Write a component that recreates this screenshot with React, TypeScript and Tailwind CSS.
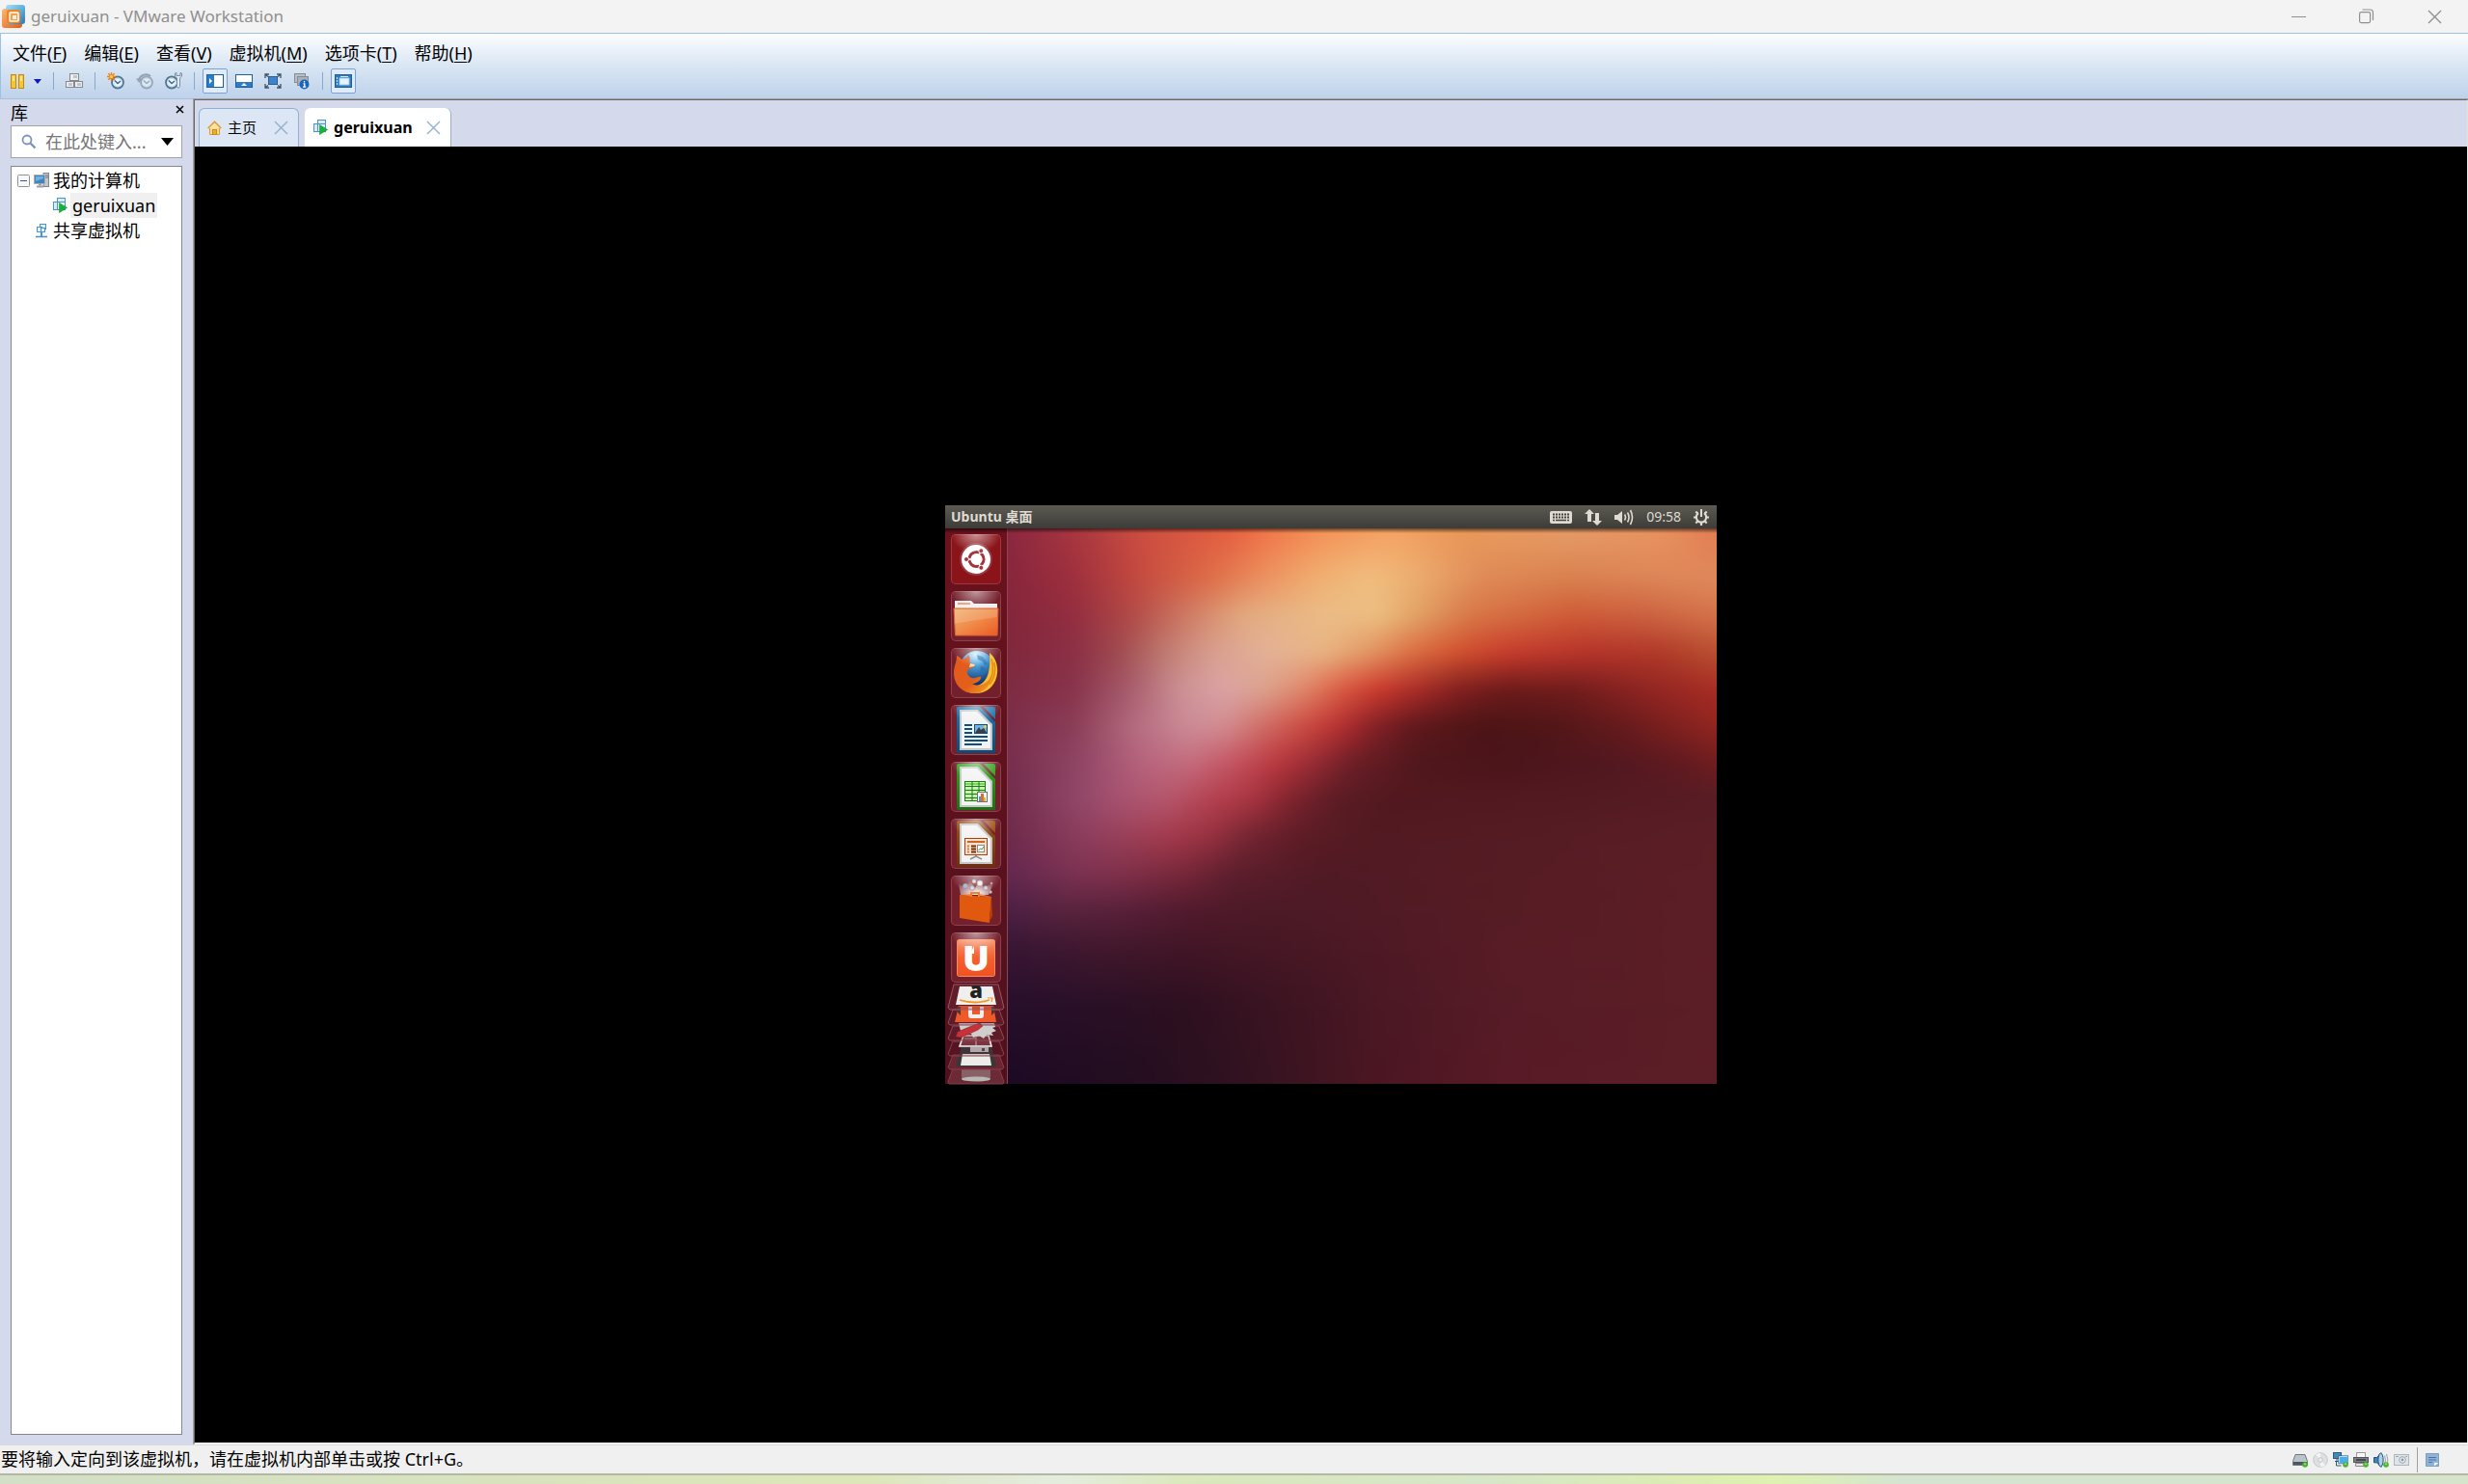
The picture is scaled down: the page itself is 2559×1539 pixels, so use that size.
import * as React from 'react';
import { clsx } from 'clsx';

type IconProps = { className?: string };

const UI_FONT = "font-['Noto_Sans','Noto_Sans_CJK_SC',sans-serif]";

/* ---------- Window chrome icons ---------- */

function AppLogo() {
  return (
    <svg width="24" height="24" viewBox="0 0 24 24">
      <defs>
        <linearGradient id="logoBlue" x1="0" y1="0" x2="1" y2="1">
          <stop offset="0" stopColor="#a9def5" />
          <stop offset=".5" stopColor="#5fb4e0" />
          <stop offset="1" stopColor="#2c78ae" />
        </linearGradient>
        <linearGradient id="logoOrange" x1="0" y1="0" x2="1" y2="1">
          <stop offset="0" stopColor="#fbb972" />
          <stop offset="1" stopColor="#ea5a0c" />
        </linearGradient>
      </defs>
      <rect x="4" y="0" width="20" height="20" rx="3" fill="url(#logoBlue)" />
      <path
        d="M3 4h2v14a2 2 0 0 0 2 2h14v1a3 3 0 0 1-3 3H3a3 3 0 0 1-3-3V7a3 3 0 0 1 3-3z"
        fill="url(#logoOrange)"
      />
      <rect x="5" y="5" width="14" height="14" rx="2" fill="#f08326" />
      <rect x="8" y="8" width="9" height="9" rx="1" fill="#f7a04a" stroke="#fff" strokeWidth="1.500" />
      <rect x="11" y="11" width="4" height="4" fill="#fdeedd" />
    </svg>
  );
}

function MinimizeIcon() {
  return (
    <svg width="16" height="16" viewBox="0 0 16 16" stroke="#8f8f8f">
      <path d="M0 8.500h15" />
    </svg>
  );
}

function RestoreIcon() {
  return (
    <svg width="16" height="16" viewBox="0 0 16 16" fill="none" stroke="#8f8f8f" strokeWidth="1.200">
      <rect x="0.600" y="3.600" width="11" height="11" rx="1.500" />
      <path d="M3.500 1h8a3 3 0 0 1 3 3v8" />
    </svg>
  );
}

function CloseIcon({ className }: IconProps) {
  return (
    <svg width="15" height="15" viewBox="0 0 15 15" fill="none" strokeWidth="1.400" className={className}>
      <path d="M1 1l13 13M14 1L1 14" stroke="currentColor" />
    </svg>
  );
}

/* ---------- Toolbar icons ---------- */

function PauseIcon() {
  return (
    <svg width="14" height="15" viewBox="0 0 14 15">
      <g fill="#f7c531" stroke="#c78a06">
        <rect x="0.500" y="0.500" width="5" height="14" />
        <rect x="8.500" y="0.500" width="5" height="14" />
      </g>
      <path d="M2 2h2v5H2zM10 2h2v5h-2z" fill="#fde389" />
    </svg>
  );
}

function BlocksIcon() {
  return (
    <svg width="18" height="16" viewBox="0 0 18 16">
      <g fill="#eceeef" stroke="#85898f">
        <rect x="4.500" y="0.500" width="9" height="7" />
        <rect x="0.500" y="8.500" width="8" height="6" />
        <rect x="9.500" y="8.500" width="8" height="6" />
      </g>
      <path d="M8 2h4v3H8zM3 10h4v3H3zM12 10h4v3h-4z" fill="#c2c6cb" />
    </svg>
  );
}

function ClockFace({ muted }: { muted?: boolean }) {
  return (
    <g opacity={muted ? 0.65 : 1}>
      <circle cx="11" cy="10.500" r="6" fill="#eaf4fb" stroke={muted ? '#7e8b9c' : '#4f7896'} strokeWidth="1.800" />
      <circle cx="11" cy="10.500" r="4.300" fill="none" stroke="#b8d2e2" strokeWidth=".8" />
      <path d="M8 8.500l3 3 3-2.500" fill="none" stroke={muted ? '#7e8b9c' : '#3c6788'} strokeWidth="1.400" />
    </g>
  );
}

function TakeSnapshotIcon() {
  return (
    <svg width="18" height="18" viewBox="0 0 18 18">
      <ClockFace />
      <path d="M4.500 0v9M0 4.500h9M1.300 1.300l6.400 6.400M7.700 1.300L1.300 7.700" stroke="#f07d12" strokeWidth="1.400" />
      <circle cx="4.500" cy="4.500" r="1.600" fill="#ffd35a" />
    </svg>
  );
}

function RevertSnapshotIcon() {
  return (
    <svg width="18" height="18" viewBox="0 0 18 18">
      <ClockFace muted />
      <path d="M3 8a7.500 7.500 0 0 1 12-4" fill="none" stroke="#93a2b4" strokeWidth="2.200" />
      <path d="M0 6.500h6.500L3.200 11z" fill="#93a2b4" />
    </svg>
  );
}

function ManageSnapshotIcon() {
  return (
    <svg width="18" height="18" viewBox="0 0 18 18">
      <g transform="translate(-4 0)">
        <ClockFace />
      </g>
      <path
        d="M10.500 1v3l2 2v8.500a1.500 1.500 0 0 0 3 0V6l2-2V1l-1.500-.5v3h-4V.5z"
        fill="#e4eaf0"
        stroke="#6c87a0"
        strokeWidth=".9"
      />
    </svg>
  );
}

function SidebarIcon() {
  return (
    <svg width="18" height="14" viewBox="0 0 18 14">
      <rect x="0.500" y="0.500" width="17" height="13" fill="#fff" stroke="#1d5f9f" />
      <rect x="1" y="1" width="7" height="12" fill="#2b7cc4" />
      <path d="M3 4v6l3-3z" fill="#fff" />
    </svg>
  );
}

function ThumbnailBarIcon() {
  return (
    <svg width="18" height="14" viewBox="0 0 18 14">
      <rect x="0.500" y="0.500" width="17" height="13" fill="#fff" stroke="#1d5f9f" />
      <rect x="1" y="8" width="16" height="5" fill="#2b7cc4" />
      <path d="M6 12h6l-3-3z" fill="#fff" />
    </svg>
  );
}

function FullscreenIcon() {
  return (
    <svg width="18" height="16" viewBox="0 0 18 16">
      <rect x="4.500" y="3.500" width="9" height="8" fill="#3c83c8" stroke="#2a5e94" />
      <path
        d="M1 5V1h4M13 1h4v4M17 11v4h-4M5 15H1v-4M1.500 1.500l2.500 2M16.500 1.500l-2.500 2M1.500 14.500l2.500-2M16.500 14.500l-2.500-2"
        fill="none"
        stroke="#3e5468"
        strokeWidth="1.300"
      />
    </svg>
  );
}

function UnityIcon() {
  return (
    <svg width="18" height="18" viewBox="0 0 18 18">
      <rect x="1.500" y="1.500" width="11" height="9" fill="#b8bec6" stroke="#848c96" />
      <rect x="4.500" y="4.500" width="11" height="9" fill="#a9b0ba" stroke="#848c96" />
      <circle cx="11.500" cy="12.500" r="5" fill="#1667b8" />
      <path d="M11.500 9v1.500M10.500 11.800h1.300v3.200M10 15.200h3.200" stroke="#fff" strokeWidth="1.300" fill="none" />
    </svg>
  );
}

function StretchIcon() {
  return (
    <svg width="18" height="14" viewBox="0 0 18 14">
      <rect x="0.500" y="0.500" width="17" height="13" fill="#2b7cc4" stroke="#1d5f9f" />
      <rect x="5" y="4" width="10" height="7" fill="#eaf3fb" stroke="#9cc4e6" />
      <path d="M2 3h1v2H2zM2 6h1v2H2zM2 9h1v2H2zM6 2h8v1H6z" fill="#d4e8f8" />
    </svg>
  );
}

/* ---------- Library and tab icons ---------- */

function SearchIcon() {
  return (
    <svg width="16" height="16" viewBox="0 0 16 16" fill="none">
      <circle cx="6" cy="6" r="4.500" stroke="#7c93bd" strokeWidth="1.800" />
      <path d="M9.500 9.500l5 5" stroke="#7c93bd" strokeWidth="2.400" />
    </svg>
  );
}

function ComputerIcon() {
  return (
    <svg width="16" height="16" viewBox="0 0 16 16">
      <rect x="10" y="0.500" width="5.500" height="14" fill="#c3c7cb" stroke="#7f858c" />
      <path d="M12 3h3M12 5h3" stroke="#6f757c" />
      <rect x="0.500" y="2.500" width="11" height="9" fill="#3f86c0" stroke="#a9afb5" />
      <path d="M2 4h8v2L2 9z" fill="#76b0da" />
      <path d="M3 14.500h7" stroke="#9a9fa5" strokeWidth="2" />
      <path d="M5 12.500h3" stroke="#9a9fa5" strokeWidth="2" />
    </svg>
  );
}

function RunningVmIcon() {
  return (
    <svg width="15" height="16" viewBox="0 0 15 16">
      <g fill="#d8ecfa" stroke="#4b93cc">
        <rect x="4.500" y="0.500" width="8" height="7" />
        <rect x="0.500" y="4.500" width="6" height="8" />
        <rect x="4.500" y="4.500" width="8" height="8" fill="#eef7fd" />
      </g>
      <path d="M6.500 5.500v10l8-5z" fill="#12b636" stroke="#0d962a" strokeWidth=".6" />
    </svg>
  );
}

function SharedVmIcon() {
  return (
    <svg width="12" height="15" viewBox="0 0 12 15">
      <g fill="#e3f1fb" stroke="#4b93cc">
        <rect x="4.500" y="0.500" width="6" height="5" />
        <rect x="1.500" y="3.500" width="5" height="5" />
        <rect x="5.500" y="4.500" width="4" height="4" />
      </g>
      <path d="M6 9v4" stroke="#4b93cc" strokeWidth="2" />
      <path d="M0 13.500h12" stroke="#4b93cc" strokeWidth="1.600" />
    </svg>
  );
}

function HomeIcon() {
  return (
    <svg width="15" height="16" viewBox="0 0 15 16">
      <path d="M2.500 7h10v7.500h-10z" fill="#fbdc8c" stroke="#d99a3a" />
      <path d="M0.700 8L7.500 1.200 14.300 8" fill="#fbe4a4" stroke="#dd9a34" strokeWidth="1.500" />
      <rect x="5.500" y="9.500" width="4" height="5" fill="#e6b12a" stroke="#c98a28" />
    </svg>
  );
}

/* ---------- Status bar icons ---------- */

function GreenDot({ x = 13 }: { x?: number }) {
  return (
    <>
      <circle cx={x} cy="13" r="2.800" fill="#46b52c" />
      <circle cx={x} cy="12.300" r="1" fill="#9de27e" />
    </>
  );
}

function HardDiskIcon() {
  return (
    <svg width="16" height="16" viewBox="0 0 16 16">
      <path d="M3 2.500h10l2.500 7v4H.5v-4z" fill="#b9c3ca" stroke="#6d7882" />
      <path d="M1 10h14v3H1z" fill="#4d5760" />
      <GreenDot />
    </svg>
  );
}

function DiscIcon() {
  return (
    <svg width="16" height="16" viewBox="0 0 16 16">
      <circle cx="8" cy="8" r="7.300" fill="#dfe0e2" stroke="#c4c6c9" />
      <path d="M8 8L3 2.500A7 7 0 0 1 8 1zM8 8l5 5.500A7 7 0 0 1 8 15z" fill="#f4f4f5" />
      <circle cx="8" cy="8" r="2.300" fill="#f0f0f0" stroke="#bfc1c4" />
    </svg>
  );
}

function NetworkIcon() {
  return (
    <svg width="16" height="16" viewBox="0 0 16 16">
      <rect x="0.500" y="0.500" width="8" height="6" fill="#4a86b5" stroke="#2c5a80" />
      <path d="M4 7v2M2 9.500h4M3.500 10v4h5" stroke="#2c5a80" fill="none" />
      <rect x="6.500" y="4.500" width="9" height="7" fill="#43aef0" stroke="#dceaf4" />
      <rect x="5.800" y="3.800" width="10" height="8" fill="none" stroke="#2c5a80" strokeWidth=".7" />
      <GreenDot />
    </svg>
  );
}

function PrinterIcon() {
  return (
    <svg width="16" height="16" viewBox="0 0 16 16">
      <rect x="3.500" y="0.500" width="9" height="6" fill="#fafafa" stroke="#9b9b9b" />
      <rect x="0.500" y="5.500" width="15" height="5" fill="#7d7f86" stroke="#55565c" />
      <path d="M3 8h10" stroke="#33343a" strokeWidth="1.500" />
      <path d="M2.500 11.500h11v3h-11z" fill="#e6e6ea" stroke="#8b8b92" />
      <GreenDot />
    </svg>
  );
}

function SoundIcon() {
  return (
    <svg width="16" height="16" viewBox="0 0 16 16">
      <path d="M.5 5.500h3L8 .8v14.500l-4.500-4.500h-3z" fill="#3c86bd" stroke="#2b4f75" />
      <ellipse cx="7.500" cy="8" rx="2.600" ry="7" fill="#a8d2ec" stroke="#2b4f75" />
      <path d="M11.500 3.500q2 4.500 0 9M13.500 2q2.800 6 0 12" fill="none" stroke="#9aa3ab" />
      <GreenDot x={13} />
    </svg>
  );
}

function CameraIcon() {
  return (
    <svg width="16" height="14" viewBox="0 0 16 14">
      <rect x="0.500" y="1.500" width="15" height="11" fill="#dfe4e8" stroke="#aeb6bd" />
      <path d="M2 3.500h3M12 3.500h2" stroke="#98a3ac" />
      <circle cx="9" cy="7" r="3.300" fill="#eef2f5" stroke="#97a3ad" />
      <circle cx="9" cy="7" r="1.400" fill="#8795a1" />
    </svg>
  );
}

function MessageIcon() {
  return (
    <svg width="14" height="14" viewBox="0 0 14 14">
      <path d="M.5.5h13v13H.5z" fill="#8fb2d6" stroke="#7c9cc0" />
      <path d="M3 4.500h8M3 7h8M3 9.500h4" stroke="#4d74a1" />
      <path d="M9 13.500v-3.500h4.500z" fill="#eef5fb" />
    </svg>
  );
}

/* ---------- Guest desktop ---------- */

const WALLPAPER: { y: number; stops: string }[] = [
  { y: 80, stops: '0 #8a2840,150 #a8363f,300 #cc4e40,500 #e66242,560 #f07448,700 #f4955a,850 #f5a566,1000 #e99858,1250 #e59a66,1450 #e8925e,1568 #e27c54' },
  { y: 200, stops: '0 #88263c,150 #9e303e,300 #c64c40,450 #de6e48,560 #eb9060,680 #f0ae70,800 #f0be80,900 #ecae70,1050 #df8a58,1250 #d8804e,1400 #dc8456,1568 #e08a5c' },
  { y: 300, stops: '0 #84263c,150 #942e40,280 #b24c48,400 #d07c66,520 #e2aa80,700 #ebbc88,820 #ecbe80,900 #e2a468,1020 #d87848,1250 #cf5a36,1400 #cb6040,1568 #d4724a' },
  { y: 400, stops: '0 #80283c,150 #8c3046,250 #a04c50,350 #c07c72,450 #d89e8e,580 #e4b298,700 #e8b482,800 #e29664,900 #dc6c40,1000 #d2502f,1100 #c83c2c,1300 #b4332a,1450 #b03a28,1568 #b85030' },
  { y: 500, stops: '0 #7e2c42,150 #88344c,280 #aa6070,380 #cc9094,480 #dba4a6,570 #dca28c,660 #e08468,740 #da5840,820 #cc382c,900 #ac2c28,1000 #801f1f,1100 #6c1a1a,1250 #701c1c,1400 #8e2422,1568 #a82c24' },
  { y: 600, stops: '0 #7a2e4a,150 #8c3e58,280 #b46c80,400 #cc8c98,480 #d28c90,560 #d06e68,660 #cc4840,740 #b42e30,800 #882228,900 #5e181c,1050 #4c1416,1200 #501618,1350 #641a1c,1500 #84221f,1568 #92261f' },
  { y: 700, stops: '0 #762e4c,150 #8e4464,300 #b8647e,400 #c46c7e,500 #c45260,600 #b8363c,680 #942a34,760 #6c1e26,900 #50181c,1100 #4a151a,1350 #521820,1500 #621a20,1568 #701e20' },
  { y: 800, stops: '0 #722c4c,150 #904668,250 #a85270,350 #b4566c,450 #b4404e,540 #a83440,620 #80242e,720 #5c1c24,850 #52181f,1568 #561c24' },
  { y: 900, stops: '0 #6e2a4a,150 #8a3c5c,250 #98405a,350 #a43a4c,450 #963040,540 #702430,650 #5c1c26,800 #521a22,1100 #541c24,1568 #5c1e26' },
  { y: 1000, stops: '0 #642850,150 #7c3252,250 #80304a,380 #78283a,500 #5c1e2c,700 #501a24,1100 #561c24,1568 #5c1e26' },
  { y: 1100, stops: '0 #4c2044,120 #58243e,250 #58203a,400 #501a2c,600 #4c1a26,1100 #561c24,1568 #5c1e26' },
  { y: 1200, stops: '0 #381634,200 #42182e,400 #421626,700 #4a1824,1100 #581c26,1568 #5c1e26' },
  { y: 1350, stops: '0 #280f2c,200 #2a1026,400 #2e1020,600 #3c1422,800 #4a1824,1100 #561c26,1568 #5c1e26' },
  { y: 1568, stops: '0 #1c0a24,300 #240e20,500 #301220,800 #4a1622,1100 #581a26,1568 #5c1e26' },
];

// Each band fades in over the one above it, so the rows blend vertically
function Wallpaper() {
  return (
    <svg
      className="block h-full w-full"
      viewBox="0 64 1568 1504"
      preserveAspectRatio="none"
      aria-hidden="true"
    >
      <defs>
        <filter
          id="soften"
          filterUnits="userSpaceOnUse"
          x="-100"
          y="-40"
          width="1768"
          height="1720"
          colorInterpolationFilters="sRGB"
        >
          <feGaussianBlur stdDeviation="20" />
        </filter>
        {WALLPAPER.map((band, i) => {
          const prev = WALLPAPER[i - 1]?.y ?? -60;
          return (
            <React.Fragment key={band.y}>
              <linearGradient id={`band${i}`} gradientUnits="userSpaceOnUse" x1="0" y1="0" x2="1568" y2="0">
                {band.stops.split(',').map(stop => {
                  const [x, color] = stop.split(' ');
                  return <stop key={x} offset={Number(x) / 1568} stopColor={color} />;
                })}
              </linearGradient>
              <linearGradient id={`fade${i}`} gradientUnits="userSpaceOnUse" x1="0" y1={prev} x2="0" y2={band.y}>
                <stop offset="0" stopColor="#fff" stopOpacity={i === 0 ? 1 : 0} />
                <stop offset="1" stopColor="#fff" />
              </linearGradient>
              <mask
                id={`mask${i}`}
                maskUnits="userSpaceOnUse"
                x="-100"
                y="-60"
                width="1768"
                height="1760"
                style={{ maskType: 'alpha' }}
              >
                <rect x="-100" y={prev} width="1768" height={1700 - prev} fill={`url(#fade${i})`} />
              </mask>
            </React.Fragment>
          );
        })}
      </defs>
      <g filter="url(#soften)">
        {WALLPAPER.map((band, i) => (
          <rect
            key={band.y}
            x="-100"
            y={WALLPAPER[i - 1]?.y ?? -60}
            width="1768"
            height={1700 - (WALLPAPER[i - 1]?.y ?? -60)}
            fill={`url(#band${i})`}
            mask={`url(#mask${i})`}
          />
        ))}
      </g>
    </svg>
  );
}

function DashIcon() {
  return (
    <svg width="52" height="52" viewBox="0 0 52 52">
      <circle cx="26" cy="26" r="17" fill="#fff" opacity=".15" />
      <circle cx="26" cy="26" r="15" fill="#fff" />
      <circle cx="26.500" cy="26" r="7.600" fill="none" stroke="#a3363c" strokeWidth="3" />
      <path d="M26.500 26L16 26M26.500 26l5 -9M26.500 26l5 9" stroke="#fff" strokeWidth="1.400" />
      <g fill="#a3363c" stroke="#fff" strokeWidth="1">
        <circle cx="16" cy="26" r="2.500" />
        <circle cx="31.300" cy="17.200" r="2.500" />
        <circle cx="31.300" cy="34.800" r="2.500" />
      </g>
      <circle cx="26.500" cy="26" r="5.800" fill="#fff" />
    </svg>
  );
}

function FilesIcon() {
  return (
    <svg width="52" height="52" viewBox="0 0 52 52">
      <defs>
        <linearGradient id="folder" x1="0" y1="0" x2="1" y2="1">
          <stop offset="0" stopColor="#efb170" />
          <stop offset=".5" stopColor="#f08a48" />
          <stop offset="1" stopColor="#ea5a24" />
        </linearGradient>
      </defs>
      <path d="M4 10h17l3 3h24v8H4z" fill="#f1eeee" />
      <rect x="7" y="12" width="13" height="2" fill="#ee9a78" />
      <path d="M3 18h46l-1 28H4.500z" fill="url(#folder)" stroke="#d9652f" />
      <path d="M4 19h44v8Q20 31 4 34z" fill="#fff" opacity=".16" />
    </svg>
  );
}

function FirefoxIcon() {
  return (
    <svg width="52" height="52" viewBox="0 0 52 52">
      <defs>
        <radialGradient id="globe" cx=".45" cy=".1" r=".9">
          <stop offset="0" stopColor="#cdeeff" />
          <stop offset=".35" stopColor="#4ba3dc" />
          <stop offset="1" stopColor="#0b2a68" />
        </radialGradient>
        <linearGradient id="fox" x1="0" y1="0" x2="1" y2="1">
          <stop offset="0" stopColor="#e2571c" />
          <stop offset=".6" stopColor="#e2601a" />
          <stop offset="1" stopColor="#f6a623" />
        </linearGradient>
      </defs>
      <circle cx="27" cy="21" r="18" fill="url(#globe)" />
      <path d="M27 7l6 2 5 7-3 2-2-4-5-2zM31 19l5 2-2 5-4 1z" fill="#2a6fb0" opacity=".8" />
      <path
        d="M40 5c6 5 9 12 8 21-1 12-10 21-22 21-9 0-15-4-18-10 8 4 18 5 25-1 6-5 8-15 7-31z"
        fill="#f8c030"
      />
      <path d="M42 11c3 9 2 20-5 27M45 15c2 8 0 17-5 23" fill="none" stroke="#e58a16" strokeWidth="1.500" />
      <path
        d="M6 8c2 1 4 2 5 4 3-1 5-1 7-5 2 3 2 5 1 8l6 2c0 3-4 4-7 5-3 3 0 8 4 9 4 1 6-2 9-1 1 3-5 7-9 7 7 4 17 0 20-9 0 11-8 19-18 19C12 47 3 38 3 26 3 19 6 15 6 8z"
        fill="url(#fox)"
      />
      <path d="M20 16l5 1-1 2-5 1z" fill="#f7e0c4" />
    </svg>
  );
}

function DocumentBase({ id, dark, light }: { id: string; dark: string; light: string }) {
  return (
    <>
      <defs>
        <linearGradient id={id} x1="0" y1="0" x2="0" y2="1">
          <stop offset="0" stopColor={light} />
          <stop offset="1" stopColor={dark} />
        </linearGradient>
      </defs>
      <path d="M8 2h22l16 16v32H8a2 2 0 0 1-2-2V4a2 2 0 0 1 2-2z" fill={`url(#${id})`} />
      <path d="M34 2h10a2 2 0 0 1 2 2v11z" fill={light} />
      <path d="M9 5h19l15 15v27H9z" fill="#c4c6c7" />
      <path d="M11 7h16l14 14v24H11z" fill="#f3f3f3" />
    </>
  );
}

function WriterIcon() {
  return (
    <svg width="52" height="52" viewBox="0 0 52 52">
      <DocumentBase id="writer" dark="#0d4a74" light="#1f78b0" />
      <path d="M14 21h8M14 25h8M14 29h8M14 33h24M14 37h24M14 41h18" stroke="#0d4f7c" strokeWidth="2" />
      <rect x="24.500" y="20.500" width="13" height="9" fill="#6cb5e6" stroke="#0d4f7c" />
      <path d="M25 29l4-6 2 3 3-2 3 5z" fill="#3b3d3f" />
      <circle cx="35.500" cy="22.500" r="1.500" fill="#f3cf3c" />
    </svg>
  );
}

function CalcIcon() {
  return (
    <svg width="52" height="52" viewBox="0 0 52 52">
      <DocumentBase id="calc" dark="#1f6f14" light="#35a420" />
      <rect x="14.500" y="20.500" width="21" height="20" fill="#c9f1b5" stroke="#178008" />
      <path d="M15 22h20v2H15z" fill="#7ed164" />
      <path d="M15 25.500h20M15 29.500h20M15 33.500h20M15 37.500h20M22 21v19M29 21v19" stroke="#178008" />
      <rect x="27.500" y="31.500" width="10" height="10" fill="#f6f6f6" stroke="#707070" />
      <path d="M29 36h2v5h-2z" fill="#3d9ad8" />
      <path d="M31 33h3v8h-3z" fill="#e26c2a" />
      <path d="M34 37h2v4h-2z" fill="#f1b92e" />
    </svg>
  );
}

function ImpressIcon() {
  return (
    <svg width="52" height="52" viewBox="0 0 52 52">
      <DocumentBase id="impress" dark="#6d300c" light="#9c5218" />
      <rect x="14.500" y="20.500" width="23" height="17" fill="#fbe0cc" stroke="#a5420f" />
      <path d="M17 24h18" stroke="#cf6526" strokeWidth="2" />
      <path d="M17 28.500h2M17 31.500h2M17 34.500h2" stroke="#dc7c46" strokeWidth="2" />
      <path d="M21 28.500h5M21 31.500h5M21 34.500h5" stroke="#74300b" strokeWidth="2" />
      <rect x="27.500" y="27.500" width="7" height="7" fill="#fff" stroke="#8a8a8a" />
      <path d="M28.500 33l2-2 1.500 1 2-3" fill="none" stroke="#3a9b34" />
      <path d="M26 38v1l-6 3M26 39l6 3" fill="none" stroke="#8f8f8f" strokeWidth="1.500" />
    </svg>
  );
}

function SoftwareCenterIcon() {
  return (
    <svg width="52" height="52" viewBox="0 0 52 52">
      <defs>
        <radialGradient id="burst" cx=".5" cy=".9" r=".8">
          <stop offset="0" stopColor="#fff" />
          <stop offset="1" stopColor="#fff" stopOpacity="0" />
        </radialGradient>
      </defs>
      <path d="M10 20L8 8l8 6 3-10 6 9 6-10 3 10 11-7-6 14z" fill="url(#burst)" />
      <g fill="#d8d4d6" stroke="#97868d" strokeWidth=".8">
        <circle cx="15" cy="11" r="2.600" fill="#8fb2d4" />
        <circle cx="24" cy="6" r="2" />
        <circle cx="30" cy="8" r="3" fill="#eceaea" />
        <circle cx="36" cy="13" r="2.300" />
        <circle cx="22" cy="13" r="2.300" />
        <circle cx="42" cy="8" r="1" />
        <circle cx="41" cy="17" r="1.500" />
      </g>
      <path d="M9 20l33 2-2 27-31-5z" fill="#e0590f" />
      <path d="M42 22l1 20-3.500 6.500z" fill="#b33f08" />
      <path d="M10 20l10-1v2zM30 19l12 3-12-1z" fill="#f49250" />
      <path d="M21 22v-4h8v4" fill="none" stroke="#f37a26" strokeWidth="2" />
    </svg>
  );
}

function UbuntuOneIcon() {
  return (
    <svg width="52" height="52" viewBox="0 0 52 52">
      <defs>
        <linearGradient id="uone" x1="0" y1="0" x2="0" y2="1">
          <stop offset="0" stopColor="#f7936e" />
          <stop offset=".5" stopColor="#f2602f" />
          <stop offset="1" stopColor="#f0521f" />
        </linearGradient>
      </defs>
      <rect x="6.500" y="7.500" width="39" height="38" rx="2" fill="url(#uone)" stroke="#f58a66" />
      <text
        x="26"
        y="40"
        textAnchor="middle"
        fontFamily="Inter, sans-serif"
        fontWeight="900"
        fontSize="36"
        fill="#fff"
      >
        U
      </text>
      <path d="M20 22l4-8v8z" fill="#fff" />
    </svg>
  );
}

// Icons that do not fit are folded up at the foot of the launcher
function FoldedIcons() {
  return (
    <svg width="64" height="104" viewBox="0 0 64 104" className="block overflow-visible">
      <g>
        <path d="M8 88h48l5 14-1 2H4l-1-2z" fill="#6a2a36" stroke="#86404c" />
        <path d="M17 84h30v14q-15 4-30 0z" fill="#b9b2b2" opacity=".4" />
        <ellipse cx="32" cy="99" rx="15" ry="2.500" fill="#b8b8b5" />
      </g>
      <g>
        <path d="M8 74h48l5 13-2 2H5l-2-2z" fill="#6a2632" stroke="#86404c" />
        <path d="M17 65h31l5 21H11z" fill="#37383a" />
        <path d="M26 66h19v5H26z" fill="#c5c8ca" />
        <path d="M38 67h3v3h-3z" fill="#4c4e50" />
        <path d="M18 73h28l2 12H16z" fill="#ececea" />
      </g>
      <g>
        <path d="M8 60h48l5 13-2 2H5l-2-2z" fill="#6a2632" fillOpacity=".2" stroke="#86404c" />
        <path d="M19 54h26l3 11H15z" fill="#7c3440" stroke="#f3f3f3" strokeWidth="1.600" />
        <path d="M32 54v11M20 57h12" stroke="#f3f3f3" opacity=".6" />
      </g>
      <g>
        <path d="M8 44h48l5 13-2 2H5l-2-2z" fill="#7c3440" fillOpacity=".3" stroke="#8f4a55" />
        <path d="M14 41h37l1 4-3 1 4 3-5 2 2 3-7-1-3 4-5-3-6 2-2-4-9 1-2-4z" fill="#cfcfce" />
        <path d="M11 55l2-5 17-7 6-2 3 3-5 4-18 8z" fill="#c8303a" stroke="#8c1e28" strokeWidth=".6" />
      </g>
      <g>
        <path d="M8 27h48l5 14-2 2H5l-2-2z" fill="#7c3440" fillOpacity=".3" stroke="#8f4a55" />
        <path d="M14 23h36l3 17H10z" fill="#ee5a2a" />
        <path d="M11 28q1-4 5-4v9zM53 28q-1-4-5-4v9z" fill="#50352f" />
        <path d="M24 24h4v8h8v-8h4v9q0 3-3 3H27q-3 0-3-3z" fill="#f4eeee" />
      </g>
      <g>
        <path d="M9 1h46l6 24-2 2H5l-2-2z" fill="#823a46" fillOpacity=".3" stroke="#9a5660" />
        <path d="M15 3h34l4 19H11z" fill="#efefef" />
        <text
          x="32"
          y="15"
          textAnchor="middle"
          fontFamily="Open Sans, sans-serif"
          fontWeight="800"
          fontSize="22"
          fill="#222"
        >
          a
        </text>
        <path d="M15 17q16 5 31 0" fill="none" stroke="#f4981d" strokeWidth="1.800" />
        <path d="M44 15l5 0-1 4" fill="none" stroke="#f4981d" strokeWidth="1.200" />
      </g>
    </svg>
  );
}

const LAUNCHER_ITEMS = [
  { label: 'Dash', Icon: DashIcon },
  { label: 'Files', Icon: FilesIcon },
  { label: 'Firefox', Icon: FirefoxIcon },
  { label: 'Writer', Icon: WriterIcon },
  { label: 'Calc', Icon: CalcIcon },
  { label: 'Impress', Icon: ImpressIcon },
  { label: 'Software Center', Icon: SoftwareCenterIcon },
  { label: 'Ubuntu One', Icon: UbuntuOneIcon },
];

function Launcher() {
  return (
    <div className="flex w-[65px] shrink-0 flex-col justify-between border-r border-[#8c4656] bg-linear-to-b from-[#6c121c] to-[#4f101f]">
      <div className="flex flex-col items-center gap-[7px] pt-[6px]">
        {LAUNCHER_ITEMS.map(({ label, Icon }, i) => (
          <button
            key={label}
            aria-label={label}
            className={clsx(
              'relative size-[52px] overflow-hidden rounded-[5px] shadow-[inset_0_0_0_1px_rgba(255,255,255,0.16)]',
              i === 0 ? 'bg-[#8a1419]' : 'bg-[#74202c]'
            )}
          >
            <Icon />
            <span className="absolute inset-x-0 top-0 h-5 bg-radial-[at_50%_0%] from-white/55 to-transparent to-70%" />
          </button>
        ))}
      </div>
      <FoldedIcons />
    </div>
  );
}

function KeyboardIcon() {
  return (
    <svg width="23" height="13" viewBox="0 0 23 13">
      <rect width="23" height="13" rx="2" fill="#dfdbd2" />
      <path d="M3 3.500h17M3 6.500h17" stroke="#45443f" strokeWidth="2" strokeDasharray="2 1" />
      <path d="M3 9.500h2M6 9.500h11M18 9.500h2" stroke="#45443f" strokeWidth="1.600" />
    </svg>
  );
}

function TransferIcon() {
  return (
    <svg width="18" height="17" viewBox="0 0 18 17" fill="#dfdbd2">
      <path d="M5 0l5 5H7v8H3V5H0zM11 4h4v8h3l-5 5-5-5h3z" />
    </svg>
  );
}

function VolumeIcon() {
  return (
    <svg width="20" height="17" viewBox="0 0 20 17">
      <path d="M0 6h3l5-4v13l-5-4H0z" fill="#dfdbd2" />
      <path d="M10.500 5.500q2 3 0 6M13.500 3.500q3 5 0 10M16.500 1q4 7.500 0 15" fill="none" stroke="#dfdbd2" strokeWidth="1.600" />
    </svg>
  );
}

function PowerGearIcon() {
  return (
    <svg width="16" height="17" viewBox="0 0 16 17" fill="none" stroke="#dfdbd2">
      <path d="M5 4.200a5.200 5.200 0 1 0 6 0" strokeWidth="2.200" />
      <path d="M8 0v8" strokeWidth="2" />
      <path d="M0 8.500h2.500M13.500 8.500H16M8 14v3M2.300 14.500l2-2M13.700 14.500l-2-2M2.300 2.500l2 2M13.700 2.500l-2 2" strokeWidth="2.200" />
    </svg>
  );
}

function GuestDesktop() {
  return (
    <div className="flex h-[600px] w-[800px] flex-col">
      <div className="flex h-6 shrink-0 items-center justify-between bg-linear-to-b from-[#5c5a52] to-[#3d3c38] pl-[6px] pr-2 text-[#dfdbd2]">
        <span className="text-[14px] font-bold leading-none">Ubuntu 桌面</span>
        <div className="flex items-center gap-[13px]">
          <KeyboardIcon />
          <TransferIcon />
          <VolumeIcon />
          <time className="text-[14px] leading-none">09:58</time>
          <PowerGearIcon />
        </div>
      </div>
      <div className="relative flex min-h-0 flex-1">
        <Launcher />
        <div className="min-w-0 flex-1">
          <Wallpaper />
        </div>
        <div className="absolute inset-x-0 top-0 h-[5px] bg-linear-to-b from-black/55 to-transparent" />
      </div>
    </div>
  );
}

/* ---------- VMware window ---------- */

const MENUS = [
  ['文件', 'F'],
  ['编辑', 'E'],
  ['查看', 'V'],
  ['虚拟机', 'M'],
  ['选项卡', 'T'],
  ['帮助', 'H'],
];

function ToolButton({
  label,
  active,
  children,
}: {
  label: string;
  active?: boolean;
  children: React.ReactNode;
}) {
  return (
    <button
      aria-label={label}
      className={clsx(
        'flex size-[26px] items-center justify-center rounded-[2px]',
        active && 'border border-[#7da2ce] bg-[#dfebf9]'
      )}
    >
      {children}
    </button>
  );
}

function ToolSeparator() {
  return <span className="mx-1 h-[18px] w-px bg-[#86a9cf]" />;
}

function TitleBar() {
  return (
    <header className="flex h-[34px] shrink-0 items-center bg-[#f3f3f3] pl-[2px]">
      <AppLogo />
      <h1 className="ml-[6px] flex-1 text-[17px] text-[#8f8f8f]">geruixuan - VMware Workstation</h1>
      <button aria-label="最小化" className="flex h-full w-[70px] items-center justify-center">
        <MinimizeIcon />
      </button>
      <button aria-label="还原" className="flex h-full w-[70px] items-center justify-center">
        <RestoreIcon />
      </button>
      <button aria-label="关闭" className="flex h-full w-[70px] items-center justify-center">
        <CloseIcon className="text-[#8f8f8f]" />
      </button>
    </header>
  );
}

function MenuAndToolbar() {
  return (
    <div className="flex h-[68px] shrink-0 flex-col border-l border-t border-[#9ac1e6] bg-linear-to-b from-[#fcfdff] via-[#d9e6f3] to-[#bed2eb]">
      <nav className="flex h-9 items-end gap-[18px] pl-3 text-[18px] leading-[32px]">
        {MENUS.map(([name, key]) => (
          <button key={key}>
            {name}(<u className="underline-offset-2">{key}</u>)
          </button>
        ))}
      </nav>
      <div className="flex items-center gap-1 pl-1">
        <div className="flex">
          <ToolButton label="挂起">
            <PauseIcon />
          </ToolButton>
          <button aria-label="电源选项" className="flex w-4 items-center justify-center">
            <svg width="8" height="5" viewBox="0 0 8 5">
              <path d="M0 0h8L4 5z" fill="#0a18c8" />
            </svg>
          </button>
        </div>
        <ToolSeparator />
        <ToolButton label="发送 Ctrl+Alt+Del">
          <BlocksIcon />
        </ToolButton>
        <ToolSeparator />
        <ToolButton label="拍摄快照">
          <TakeSnapshotIcon />
        </ToolButton>
        <ToolButton label="恢复快照">
          <RevertSnapshotIcon />
        </ToolButton>
        <ToolButton label="管理快照">
          <ManageSnapshotIcon />
        </ToolButton>
        <ToolSeparator />
        <ToolButton label="显示库" active>
          <SidebarIcon />
        </ToolButton>
        <ToolButton label="缩略图栏">
          <ThumbnailBarIcon />
        </ToolButton>
        <ToolButton label="全屏">
          <FullscreenIcon />
        </ToolButton>
        <ToolButton label="Unity">
          <UnityIcon />
        </ToolButton>
        <ToolSeparator />
        <ToolButton label="控制台视图" active>
          <StretchIcon />
        </ToolButton>
      </div>
    </div>
  );
}

function Library() {
  return (
    <aside className="flex w-[200px] shrink-0 flex-col border-t border-[#a9c0dc] pb-[10px] pl-[11px] pr-[11px]">
      <div className="flex h-[27px] items-center justify-between text-[18px] leading-none">
        <h2>库</h2>
        <button aria-label="关闭库" className="-mt-1.5 -mr-1">
          <svg width="12" height="12" viewBox="0 0 12 12" className="block">
            <path d="M2 2l7 7M9 2L2 9" stroke="#000" strokeWidth="1.500" />
          </svg>
        </button>
      </div>
      <div className="flex h-[34px] shrink-0 items-center border border-[#a3a3a3] bg-white pl-[10px] pr-2">
        <SearchIcon />
        <input
          aria-label="搜索"
          placeholder="在此处键入..."
          className="ml-[9px] w-0 min-w-0 flex-1 text-[18px] leading-none outline-none placeholder:text-[#757575]"
        />
        <button aria-label="搜索选项">
          <svg width="13" height="8" viewBox="0 0 13 8" className="block">
            <path d="M0 0h13L6.500 8z" fill="#000" />
          </svg>
        </button>
      </div>
      <ul className="mt-2 flex-1 border border-[#828790] bg-white pt-px text-[18px] leading-[26px]">
        <li>
          <div className="flex h-[26px] items-center pl-[6px]">
            <button aria-label="折叠" className="mr-1">
              <svg width="13" height="13" viewBox="0 0 13 13" className="block">
                <rect x="0.500" y="0.500" width="12" height="12" rx="1" fill="#f8f8f8" stroke="#919191" />
                <path d="M3 6.500h7" stroke="#3a55a0" />
              </svg>
            </button>
            <ComputerIcon />
            <span className="ml-1">我的计算机</span>
          </div>
          <ul>
            <li className="flex h-[26px] items-center pl-[43px]">
              <RunningVmIcon />
              <span className="ml-[3px] bg-[#f0f0f0] px-[2px]">geruixuan</span>
            </li>
          </ul>
        </li>
        <li className="flex h-[26px] items-center pl-[25px]">
          <SharedVmIcon />
          <span className="ml-[6px]">共享虚拟机</span>
        </li>
      </ul>
    </aside>
  );
}

function Tabs() {
  return (
    <div role="tablist" className="flex h-12 shrink-0 items-end gap-[6px] bg-[#d5d9ec] pl-1">
      <div className="flex h-10 items-center rounded-t-md border border-b-0 border-[#8fb1cf] bg-[#dce6f4] pl-2 pr-[10px]">
        <HomeIcon />
        <button role="tab" aria-selected="false" className="ml-[6px] text-[15px]">
          主页
        </button>
        <button aria-label="关闭主页" className="ml-[18px]">
          <CloseIcon className="text-[#8fb1cf]" />
        </button>
      </div>
      <div className="flex h-10 items-center rounded-t-md border-r border-[#8fb1cf] bg-white pl-[9px] pr-[10px]">
        <RunningVmIcon />
        <button role="tab" aria-selected="true" className="ml-[6px] text-[16px] font-bold">
          geruixuan
        </button>
        <button aria-label="关闭 geruixuan" className="ml-[14px]">
          <CloseIcon className="text-[#8fb1cf]" />
        </button>
      </div>
    </div>
  );
}

function StatusBar() {
  return (
    <footer className="flex h-[30px] shrink-0 items-center justify-between border-t border-[#d9d9d9] bg-[#f0f0f0] pl-[1px] pr-[30px]">
      <p className="pb-[2px] text-[18px] leading-none">要将输入定向到该虚拟机，请在虚拟机内部单击或按 Ctrl+G。</p>
      <div className="flex items-center gap-[5px]">
        <HardDiskIcon />
        <DiscIcon />
        <NetworkIcon />
        <PrinterIcon />
        <SoundIcon />
        <CameraIcon />
        <span className="ml-[3px] mr-[3px] h-[26px] w-px bg-[#a0a0a0]" />
        <MessageIcon />
      </div>
    </footer>
  );
}

export default function App() {
  return (
    <div className={clsx('flex h-screen flex-col overflow-hidden bg-[#d5d9ec] text-black', UI_FONT)}>
      <TitleBar />
      <MenuAndToolbar />
      <div className="flex min-h-0 flex-1">
        <Library />
        <div className="flex min-w-0 flex-1 border-l border-t border-[#a0a0a0]">
          <main className="flex min-w-0 flex-1 flex-col border-b-2 border-l border-r border-t border-b-white border-l-[#696969] border-r-[#e3e3e3] border-t-[#696969]">
            <Tabs />
            <div className="flex min-h-0 flex-1 items-center justify-center bg-black">
              <GuestDesktop />
            </div>
          </main>
        </div>
      </div>
      <StatusBar />
      {/* Sliver of the host desktop below the window */}
      <div className="h-[11px] shrink-0 border-t-2 border-[#b2b8a4] bg-[linear-gradient(to_right,#d3dfc6_0%,#dce6b8_35%,#e0e8d0_39%,#e4ecde_43%,#dae8bc_48%,#d6e6c8_60%,#dcecb4_68%,#dff2b0_72%,#d4e4d0_77%,#d6e4cc_100%)]" />
    </div>
  );
}
